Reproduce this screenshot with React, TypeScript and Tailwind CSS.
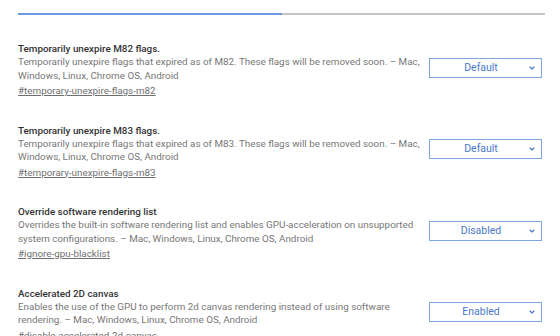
import { ChevronDown } from 'lucide-react';

type Flag = {
  title: string;
  description: string;
  link: string;
  value: string;
};

const flags: Flag[] = [
  {
    title: 'Temporarily unexpire M82 flags.',
    description:
      'Temporarily unexpire flags that expired as of M82. These flags will be removed soon. – Mac, Windows, Linux, Chrome OS, Android',
    link: '#temporary-unexpire-flags-m82',
    value: 'Default',
  },
  {
    title: 'Temporarily unexpire M83 flags.',
    description:
      'Temporarily unexpire flags that expired as of M83. These flags will be removed soon. – Mac, Windows, Linux, Chrome OS, Android',
    link: '#temporary-unexpire-flags-m83',
    value: 'Default',
  },
  {
    title: 'Override software rendering list',
    description:
      'Overrides the built-in software rendering list and enables GPU-acceleration on unsupported system configurations. – Mac, Windows, Linux, Chrome OS, Android',
    link: '#ignore-gpu-blacklist',
    value: 'Disabled',
  },
  {
    title: 'Accelerated 2D canvas',
    description:
      'Enables the use of the GPU to perform 2d canvas rendering instead of using software rendering. – Mac, Windows, Linux, Chrome OS, Android',
    link: '#disable-accelerated-2d-canvas',
    value: 'Enabled',
  },
];

function FlagRow({ flag }: { flag: Flag }) {
  return (
    <div className="mb-[26.5px]">
      <h3 className="text-[9.85px] font-medium leading-[13px] text-[#333333]">{flag.title}</h3>
      <div className="flex items-start">
        <div className="w-[404px] shrink-0">
          <p className="text-[9.85px] leading-[13.5px] text-[#777777]">{flag.description}</p>
          <a className="mt-[2px] block text-[9.85px] leading-[13px] text-[#6f6f6f] underline">{flag.link}</a>
        </div>
        <div className="ml-[7px] mt-[2.5px] flex h-[20px] w-[113px] shrink-0 items-center border border-[#7ea6e0] bg-white pl-[16px] pr-[5px]">
          <span className="flex-1 text-center text-[10.5px] text-[#4a78c8]">{flag.value}</span>
          <ChevronDown className="ml-[12px] h-[8px] w-[8px] text-[#4a78c8]" strokeWidth={3.5} />
        </div>
      </div>
    </div>
  );
}

export default function App() {
  return (
    <div
      className="h-[336px] w-[560px] overflow-hidden bg-white pl-[18px] pr-[15px]"
      style={{ fontFamily: 'Roboto, "Noto Sans", sans-serif' }}
    >
      <div className="-mt-[10px] flex text-[10px] leading-[11px]">
        <div className="h-[25px] w-[264px] overflow-hidden border-b-2 border-[#6d9be3] text-center text-[#3b78e7]">
          <span className="-mt-[2px] block">Available</span>
        </div>
        <div className="h-[25px] flex-1 border-b-2 border-[#c6c6c6] text-center text-[#a0a0a0]">Unavailable</div>
      </div>
      <div className="pt-[27px]">
        {flags.map((flag) => (
          <FlagRow key={flag.link} flag={flag} />
        ))}
      </div>
    </div>
  );
}
